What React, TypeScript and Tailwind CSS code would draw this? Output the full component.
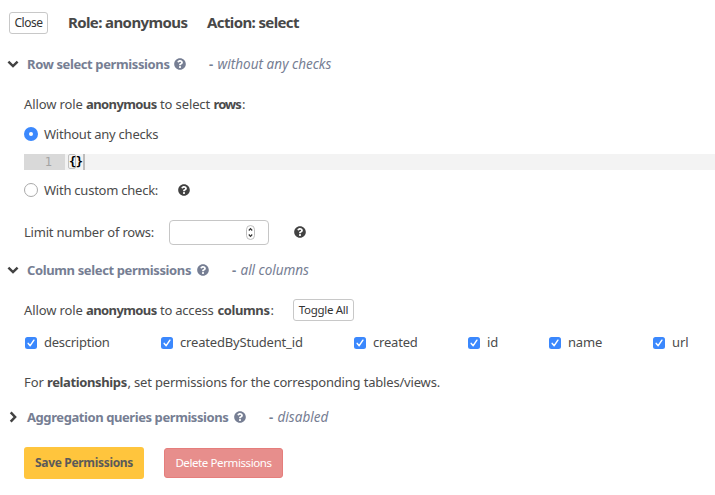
import type { ReactNode } from "react";
import { FaQuestionCircle } from "react-icons/fa";

function Chevron({ open }: { open: boolean }) {
  return (
    <svg viewBox="0 0 12 12" className={`-mt-px h-3 w-3 shrink-0 text-[#424242] ${open ? "" : "-rotate-90"}`}>
      <path d="M1.4 3.7 6 8.1l4.6-4.4" fill="none" stroke="currentColor" strokeWidth="2.5" />
    </svg>
  );
}

function Section({ title, titleClass, status, statusClass, open, className }: {
  title: string; titleClass: string; status: string; statusClass: string; open: boolean; className: string;
}) {
  return (
    <div className={`flex items-center pl-[7px] text-[#767e93] ${className}`}>
      <Chevron open={open} />
      <span className={`ml-2 shrink-0 font-bold ${titleClass}`}>{title}</span>
      <FaQuestionCircle className="ml-[3px] h-3 w-3 shrink-0" />
      <span className="ml-[23px] w-[8.5px] font-bold">-</span>
      <i className={`text-[13.5px] ${statusClass}`}>{status}</i>
    </div>
  );
}

function Radio({ checked }: { checked: boolean }) {
  return (
    <span className={`mr-[6px] flex h-[14px] w-[14px] items-center justify-center rounded-full ${checked ? "bg-[#3b88fd]" : "border border-[#a9a9a9] bg-white"}`}>
      {checked && <span className="h-1 w-1 rounded-full bg-white" />}
    </span>
  );
}

function Column({ children, className }: { children: ReactNode; className: string }) {
  return (
    <label className={`flex shrink-0 items-center ${className}`}>
      <svg viewBox="0 0 12 12" className="mr-[7px] mt-px h-3 w-3 shrink-0">
        <rect width="12" height="12" rx="2.5" fill="#3b88fd" />
        <path d="m3.2 6.4 2 2.3 3.7-5.5" fill="none" stroke="white" strokeWidth="1.5" strokeLinecap="round" strokeLinejoin="round" />
      </svg>
      {children}
    </label>
  );
}

export default function App() {
  return (
    <div className="h-[495px] w-[715px] overflow-hidden whitespace-nowrap bg-white font-['Noto_Sans',sans-serif] text-[13px] leading-5 text-[#4b4b4b]">
      <div className="flex h-11 items-center pl-[9px] text-[15px] font-bold text-[#484848]">
        <button className="mt-[2px] h-[22px] w-[39px] shrink-0 rounded-[3px] border border-[#c8c8c8] text-[12px] font-normal leading-5 tracking-[-0.45px] text-[#333]">Close</button>
        <span className="-mt-px ml-5 w-[139px] tracking-[-0.61px]">Role: anonymous</span>
        <span className="-mt-px tracking-[-0.62px]">Action: select</span>
      </div>

      <Section open title="Row select permissions" titleClass="w-[144px] tracking-[-0.38px]" status="without any checks" statusClass="tracking-[0.02px]" className="h-10" />

      <div className="flex h-10 items-center pl-6">
        <span className="w-[62px] tracking-[-0.12px]">Allow role</span>
        <b className="w-[74px] tracking-[-0.6px]">anonymous</b>
        <span className="w-[53.5px] tracking-[-0.12px]">to select</span>
        <b className="w-[28.5px] tracking-[-0.9px]">rows</b>:
      </div>
      <label className="mb-[10px] flex h-5 items-center pl-6 tracking-[-0.24px]"><Radio checked />Without any checks</label>
      <div className="ml-6 flex h-4 bg-[#f3f3f3] font-['DejaVu_Sans_Mono',monospace] text-[12px] leading-4">
        <div className="w-[41px] bg-[#d9d9d9] pr-[13px] text-right text-[#a3a3a3]">1</div>
        <div className="ml-[3px] h-4 w-[17px] border-r-2 border-[#bdbdbd]">
          <span className="flex h-[15px] w-2 rounded-[2px] border border-[#c0c0c0] font-bold leading-[14px] tracking-[-0.5px] text-black">{"{}"}</span>
        </div>
      </div>
      <label className="mt-[10px] flex h-5 items-center pl-6">
        <Radio checked={false} />
        <span className="w-[134px] tracking-[-0.24px]">With custom check:</span>
        <FaQuestionCircle className="h-3 w-3 text-[#424242]" />
      </label>

      <div className="mt-3 flex h-10 items-center pl-6">
        <span className="w-[145px] tracking-[-0.21px]">Limit number of rows:</span>
        <span className="flex h-[25px] w-[100px] items-center justify-end rounded-[4px] border border-[#c6c6c6] pr-[13px]">
          <svg viewBox="0 0 9 15" className="h-[15px] w-[9px]">
            <rect x=".5" y=".5" width="8" height="14" rx="4" fill="white" stroke="#bdbdbd" />
            <path d="m2.8 5.5 1.7-1.9 1.7 1.9M2.8 9.5l1.7 1.9 1.7-1.9" fill="none" stroke="#333" strokeWidth="1.2" />
          </svg>
        </span>
        <FaQuestionCircle className="ml-[25px] h-3 w-3 text-[#424242]" />
      </div>

      <Section open title="Column select permissions" titleClass="w-[167px] tracking-[-0.37px]" status="all columns" statusClass="tracking-[-0.02px]" className="h-9" />

      <div className="flex h-11 items-center pl-6">
        <span className="w-[62px] tracking-[-0.12px]">Allow role</span>
        <b className="w-[74px] tracking-[-0.6px]">anonymous</b>
        <span className="w-[57.5px] tracking-[-0.22px]">to access</span>
        <b className="w-[53px] tracking-[-0.4px]">columns</b>:
        <button className="ml-[19px] h-[22px] w-[61px] rounded-[3px] border border-[#c8c8c8] text-[11.5px] leading-5 tracking-[-0.3px] text-[#333]">Toggle All</button>
      </div>
      <div className="flex h-5 items-center pl-[25px]">
        <Column className="w-[136px] tracking-[-0.26px]">description</Column>
        <Column className="w-[193px] tracking-[-0.18px]">createdByStudent_id</Column>
        <Column className="w-[114px] tracking-[-0.2px]">created</Column>
        <Column className="w-[81px]">id</Column>
        <Column className="w-[104px] tracking-[-0.2px]">name</Column>
        <Column className="tracking-[-0.1px]">url</Column>
      </div>
      <div className="mt-[10px] flex h-10 items-center pl-6">
        <span className="w-[23px]">For</span>
        <b className="w-[80.5px] tracking-[-0.37px]">relationships</b>
        <span className="tracking-[-0.18px]">, set permissions for the corresponding tables/views.</span>
      </div>

      <Section open={false} title="Aggregation queries permissions" titleClass="w-[204px] tracking-[-0.42px]" status="disabled" statusClass="tracking-[0.02px]" className="h-[30px]" />

      <div className="mt-[15px] flex h-8 items-center gap-5 pl-6 text-[12px]">
        <button className="h-8 w-[120px] rounded-[3px] bg-[#ffc53d] font-bold tracking-[-0.32px] text-[#5a5a5a]">Save Permissions</button>
        <button className="h-[30px] w-[119px] rounded-[3px] border border-[#e57e7c] bg-[#e78e8c] text-[11.5px] tracking-[-0.4px] text-white">Delete Permissions</button>
      </div>
    </div>
  );
}
